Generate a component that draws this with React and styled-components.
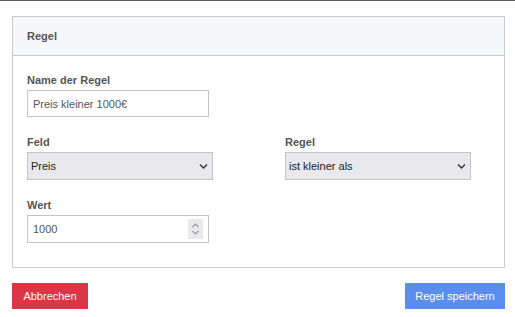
import React from "react";
import styled, { createGlobalStyle } from "styled-components";

const Global = createGlobalStyle`
  html, body { margin: 0; padding: 0; background: #fff; }
  body {
    border-top: 1px solid #5e5e5e;
    font-family: "Liberation Sans", Arial, sans-serif;
    font-size: 11px;
    color: #555;
  }
`;

const Page = styled.div`
  padding: 15px 10px 0 12px;
`;

const Card = styled.section`
  border: 1px solid #cbcbcb;
  background: #fff;
`;

const CardHeader = styled.header`
  height: 38px;
  display: flex;
  align-items: center;
  padding: 0 14px;
  background: #f5f7fb;
  border-bottom: 1px solid #cbcbcb;
  font-weight: bold;
  font-size: 11px;
  color: #555;
`;

const CardBody = styled.div`
  padding: 17px 14px 24px;
  display: flex;
  flex-direction: column;
  gap: 18px;
`;

const Row = styled.div`
  display: grid;
  grid-template-columns: 186px 186px;
  column-gap: 72px;
`;

const Field = styled.div`
  display: flex;
  flex-direction: column;
  gap: 3px;
`;

const Label = styled.label`
  font-weight: bold;
  font-size: 11px;
  line-height: 14px;
  color: #555;
`;

const TextInput = styled.input`
  box-sizing: border-box;
  width: ${(p) => p.$w || 182}px;
  height: ${(p) => p.$h || 27}px;
  border: 1px solid #c4c4c4;
  padding: 0 5px;
  font-family: "Liberation Sans", Arial, sans-serif;
  font-size: 11px;
  color: #555;
  background: #fff;
  outline: none;
  appearance: none;
  -moz-appearance: textfield;
  &::-webkit-outer-spin-button,
  &::-webkit-inner-spin-button { -webkit-appearance: none; margin: 0; }
`;

const SelectWrap = styled.div`
  position: relative;
  width: 186px;
  height: 28px;
`;

const Select = styled.select`
  box-sizing: border-box;
  width: 100%;
  height: 100%;
  appearance: none;
  -webkit-appearance: none;
  border: 1px solid #c4c4c4;
  border-radius: 0;
  background: #e9e9ed;
  padding: 0 20px 0 3px;
  font-family: "Liberation Sans", Arial, sans-serif;
  font-size: 11px;
  color: #222;
  outline: none;
`;

const Chevron = styled.svg`
  position: absolute;
  right: 5px;
  top: 50%;
  margin-top: -4px;
  pointer-events: none;
`;

const NumberWrap = styled.div`
  position: relative;
  width: 182px;
  height: 28px;
`;

const Spinner = styled.div`
  position: absolute;
  right: 6px;
  top: 4px;
  width: 15px;
  height: 20px;
  background: #e9e9ed;
  display: flex;
  align-items: center;
  justify-content: center;
  pointer-events: none;
`;

const Footer = styled.footer`
  display: flex;
  justify-content: space-between;
  margin-top: 15px;
`;

const Button = styled.button`
  height: 26px;
  width: ${(p) => p.$w}px;
  border: none;
  border-radius: 0;
  background: ${(p) => p.$bg};
  color: #fff;
  font-family: "Liberation Sans", Arial, sans-serif;
  font-size: 11px;
  padding: 0;
  cursor: pointer;
`;

function SelectField({ label, value }) {
  return (
    <Field>
      <Label>{label}</Label>
      <SelectWrap>
        <Select defaultValue={value}>
          <option>{value}</option>
        </Select>
        <Chevron width="9" height="8" viewBox="0 0 9 8">
          <path d="M1 2.5 L4.5 6 L8 2.5" fill="none" stroke="#333" strokeWidth="1.4" />
        </Chevron>
      </SelectWrap>
    </Field>
  );
}

export default function App() {
  return (
    <>
      <Global />
      <Page>
        <Card>
          <CardHeader>Regel</CardHeader>
          <CardBody>
            <Field>
              <Label>Name der Regel</Label>
              <TextInput defaultValue="Preis kleiner 1000€" />
            </Field>
            <Row>
              <SelectField label="Feld" value="Preis" />
              <SelectField label="Regel" value="ist kleiner als" />
            </Row>
            <Field>
              <Label>Wert</Label>
              <NumberWrap>
                <TextInput type="number" defaultValue="1000" $h={28} />
                <Spinner>
                  <svg width="9" height="14" viewBox="0 0 9 14">
                    <path d="M1.5 5 L4.5 2 L7.5 5" fill="none" stroke="#9a9a9a" strokeWidth="1.1" />
                    <path d="M1.5 9 L4.5 12 L7.5 9" fill="none" stroke="#9a9a9a" strokeWidth="1.1" />
                  </svg>
                </Spinner>
              </NumberWrap>
            </Field>
          </CardBody>
        </Card>
        <Footer>
          <Button $w={76} $bg="#dc3545">Abbrechen</Button>
          <Button $w={100} $bg="#5b8def">Regel speichern</Button>
        </Footer>
      </Page>
    </>
  );
}
